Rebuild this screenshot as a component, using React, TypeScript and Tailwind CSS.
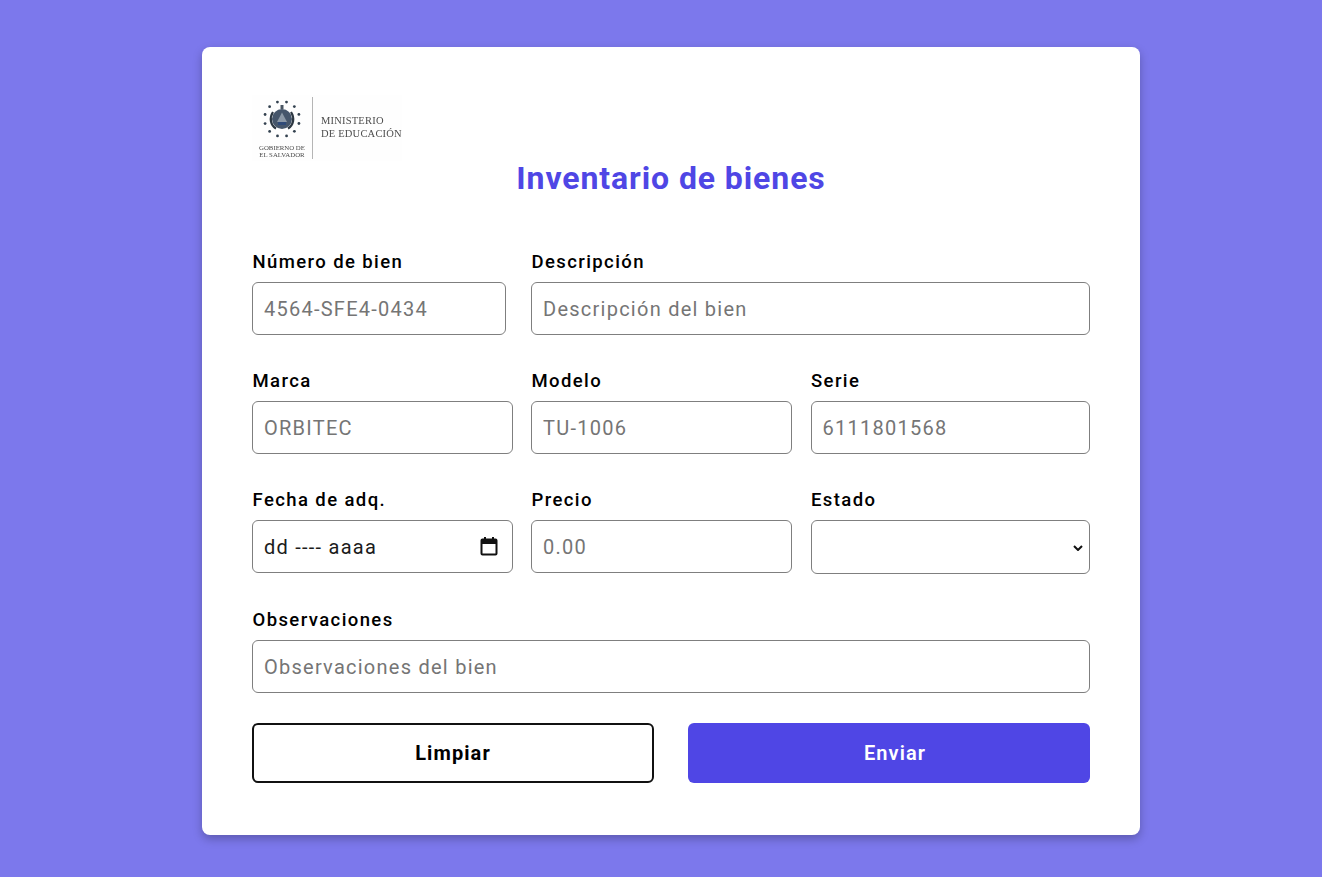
import React from 'react'

const inputCls = 'w-full h-[53px] rounded-md border border-[#7f7f7f] bg-white px-[11px] text-[20px] tracking-[1.25px] text-[#1c1c1c] placeholder:text-[#757575] outline-none'

function Field({ label, width, children }: { label: string; width: string; children: React.ReactNode }) {
  return (
    <div className={width}>
      <label className="block h-[21px] mb-[10px] pl-[0.5px] pt-px text-[18.5px] leading-[21px] font-medium tracking-[1.4px] text-black">{label}</label>
      {children}
    </div>
  )
}

// escudo + lettering of the ministry, blurry in the original
function Logo() {
  const stars = Array.from({ length: 12 }, (_, i) => {
    const a = (i / 12) * Math.PI * 2 + 0.26
    return { x: 30 + Math.cos(a) * 17.5, y: 22 + Math.sin(a) * 17.5 }
  })
  return (
    <div className="flex h-[66px] w-[150px] items-stretch bg-[#fefefe] blur-[0.4px]" style={{ fontFamily: '"Liberation Serif", serif' }}>
      <div className="flex w-[60px] flex-col items-center">
        <svg width="60" height="44" viewBox="0 0 60 44" className="mt-[2px]">
          {stars.map((s, i) => <circle key={i} cx={s.x} cy={s.y} r="1.4" fill="#33414f" />)}
          <circle cx="30" cy="22" r="10" fill="#46566b" />
          <path d="M30 15.500l5 9.500h-10z" fill="#8c98a6" />
          <path d="M26 25h8v3h-8z" fill="#2f4a78" />
          <path d="M21 15c-4 6-2.500 13 3 16.500M39 15c4 6 2.500 13-3 16.500" fill="none" stroke="#2c3742" strokeWidth="2.200" />
          <path d="M28.500 8h3v4h-3z" fill="#4a5663" />
        </svg>
        <div className="mt-[3px] whitespace-nowrap text-center text-[6.800px] leading-[7px] text-[#4b4b4b]">GOBIERNO DE<br />EL SALVADOR</div>
      </div>
      <div className="mt-[2px] h-[62px] w-px bg-[#b5b5b5]" />
      <div className="ml-[8px] mt-[20px] whitespace-nowrap text-[10.500px] leading-[12.500px] tracking-[0.2px] text-[#4d4d4d]">MINISTERIO<br />DE EDUCACIÓN</div>
    </div>
  )
}

export default function App() {
  return (
    <div className="min-h-[877px] bg-[#7c78ec] pt-[47px] pb-[42px]" style={{ fontFamily: 'Roboto, sans-serif' }}>
      <form className="ml-[202px] h-[788px] w-[938px] rounded-lg bg-white px-[50px] pt-[48px] shadow-[0_4px_10px_rgba(0,0,0,0.25)]">
        <Logo />
        <h1 className="mt-[-1px] text-center text-[32px] leading-[37px] font-bold tracking-[0.9px] text-[#4f46e5]">Inventario de bienes</h1>

        <div className="mt-[54px] flex gap-[25px]">
          <Field label="Número de bien" width="w-[254px]">
            <input className={inputCls} placeholder="4564-SFE4-0434" />
          </Field>
          <Field label="Descripción" width="w-[559px]">
            <input className={inputCls} placeholder="Descripción del bien" />
          </Field>
        </div>

        <div className="mt-[35px] flex gap-[18px]">
          <Field label="Marca" width="w-[261px]">
            <input className={inputCls} placeholder="ORBITEC" />
          </Field>
          <Field label="Modelo" width="w-[261px]">
            <input className={inputCls} placeholder="TU-1006" />
          </Field>
          <Field label="Serie" width="ml-[0.5px] w-[279.5px]">
            <input className={inputCls} placeholder="6111801568" />
          </Field>
        </div>

        <div className="mt-[35px] flex gap-[18px]">
          <Field label="Fecha de adq." width="w-[261px]">
            <div className="relative">
              <input className={inputCls} defaultValue="dd ---- aaaa" />
              <svg className="absolute right-[15px] top-[16px]" width="18" height="20" viewBox="0 0 18 20" fill="none">
                <path d="M2.500 3.500h13a1 1 0 0 1 1 1v13a1 1 0 0 1-1 1h-13a1 1 0 0 1-1-1v-13a1 1 0 0 1 1-1z" stroke="#111" strokeWidth="2" />
                <path d="M1.500 4h15v4h-15z" fill="#111" />
                <path d="M5 1v3M13 1v3" stroke="#111" strokeWidth="2" />
              </svg>
            </div>
          </Field>
          <Field label="Precio" width="w-[261px]">
            <input className={inputCls} placeholder="0.00" />
          </Field>
          <Field label="Estado" width="ml-[0.5px] w-[279.5px]">
            <div className="relative">
              <select className="h-[54px] w-full appearance-none rounded-md border border-[#7f7f7f] bg-white px-[11px] text-[19.2px] text-black outline-none">
                <option value=""></option>
                <option value="bueno">Bueno</option>
                <option value="malo">Malo</option>
              </select>
              <svg className="pointer-events-none absolute right-[7px] top-[25px]" width="10" height="6" viewBox="0 0 10 6" fill="none">
                <path d="M1 1l4 4 4-4" stroke="#111" strokeWidth="2" />
              </svg>
            </div>
          </Field>
        </div>

        <div className="mt-[35px]">
          <Field label="Observaciones" width="w-[838px]">
            <input className={inputCls} placeholder="Observaciones del bien" />
          </Field>
        </div>

        <div className="mt-[30px] flex gap-[34px]">
          <button type="button" className="h-[60px] w-[402px] rounded-md border-2 border-[#111] bg-white text-[20px] font-bold tracking-[1.1px] text-black">Limpiar</button>
          <button type="button" className="h-[60px] w-[402px] rounded-md bg-[#4f46e5] pl-[12px] text-[20px] font-semibold tracking-[1.1px] text-white">Enviar</button>
        </div>
      </form>
    </div>
  )
}
